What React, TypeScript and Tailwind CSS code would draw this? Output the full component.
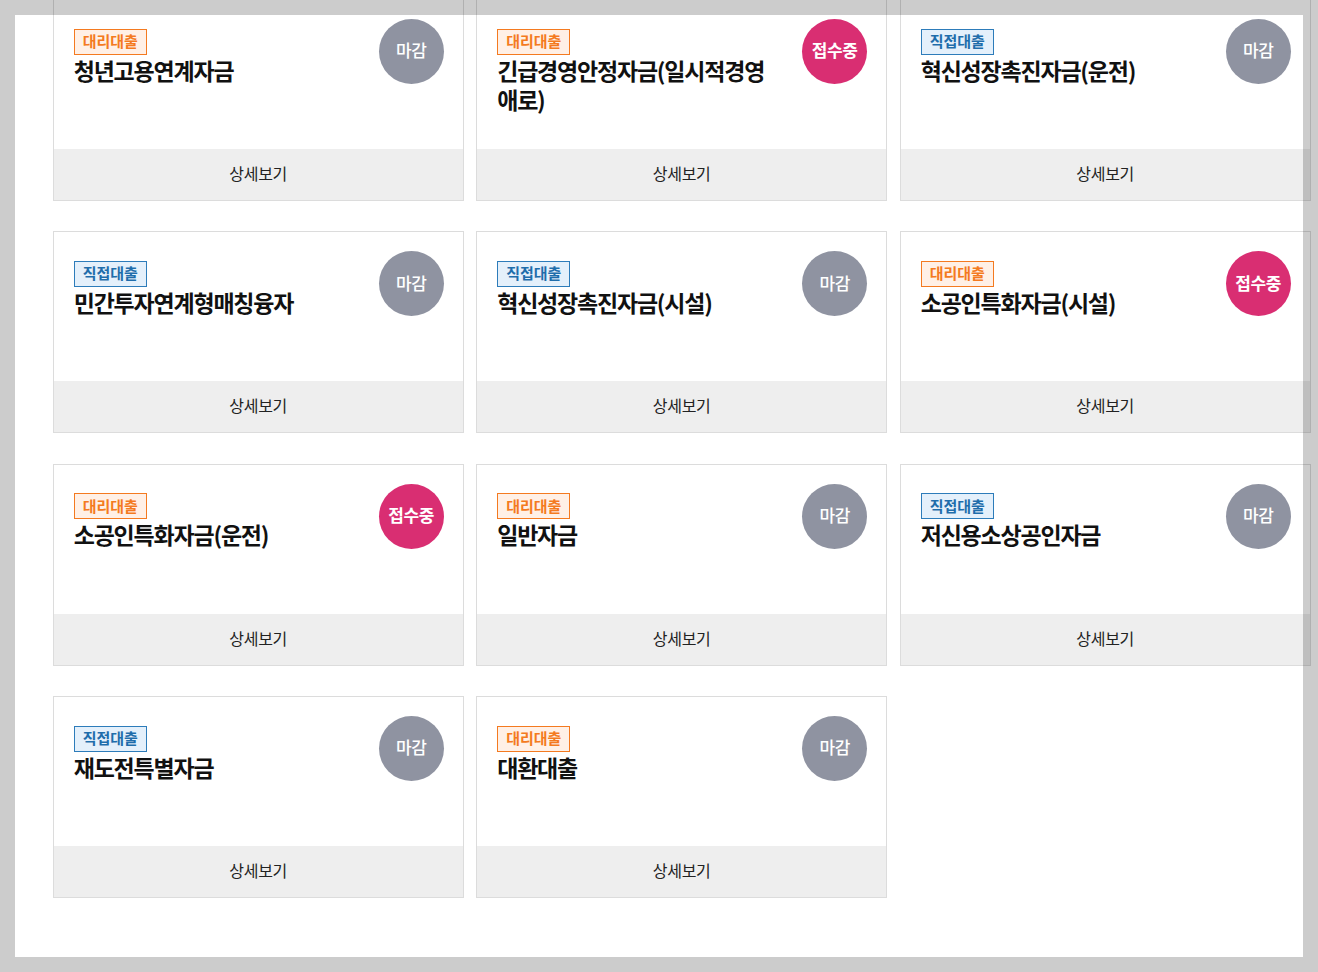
import React from "react";

type Item = { type: "대리대출" | "직접대출"; title: string; open: boolean };

const items: Item[] = [
  { type: "대리대출", title: "청년고용연계자금", open: false },
  { type: "대리대출", title: "긴급경영안정자금(일시적경영애로)", open: true },
  { type: "직접대출", title: "혁신성장촉진자금(운전)", open: false },
  { type: "직접대출", title: "민간투자연계형매칭융자", open: false },
  { type: "직접대출", title: "혁신성장촉진자금(시설)", open: false },
  { type: "대리대출", title: "소공인특화자금(시설)", open: true },
  { type: "대리대출", title: "소공인특화자금(운전)", open: true },
  { type: "대리대출", title: "일반자금", open: false },
  { type: "직접대출", title: "저신용소상공인자금", open: false },
  { type: "직접대출", title: "재도전특별자금", open: false },
  { type: "대리대출", title: "대환대출", open: false },
];

function Card({ item }: { item: Item }) {
  const agent = item.type === "대리대출";
  return (
    <div className="flex h-[202px] flex-col border border-[#dcdcdc] bg-white">
      <div className="flex flex-1 justify-between pl-[20px] pr-[19px] pt-[19px]">
        <div className="pt-[9px]">
          <span
            className={
              agent
                ? "inline-flex h-[26px] items-center border border-[#f47a20] bg-[#fff0e6] px-[8px] pb-[1px] text-[15px] font-bold tracking-[0px] text-[#f47a20]"
                : "inline-flex h-[26px] items-center border border-[#2d7cba] bg-[#e4f0fb] px-[8px] pb-[1px] text-[15px] font-bold tracking-[0px] text-[#1f6dab]"
            }
          >
            {item.type}
          </span>
          <div className="mt-[1px] w-[282px] text-[23px] font-bold leading-[29px] tracking-[-1.2px] text-[#111111]">
            {item.title}
          </div>
        </div>
        <div
          className={
            item.open
              ? "flex h-[65px] w-[65px] shrink-0 items-center justify-center rounded-full bg-[#d92e72] pb-[3px] text-[17px] font-bold tracking-[-0.4px] text-white"
              : "flex h-[65px] w-[65px] shrink-0 items-center justify-center rounded-full bg-[#8f93a1] pb-[3px] text-[17px] font-medium tracking-[-0.5px] text-white"
          }
        >
          {item.open ? "접수중" : "마감"}
        </div>
      </div>
      <div className="flex h-[51px] items-center justify-center bg-[#eeeeee] pb-[3px] text-[16px] tracking-[-0.3px] text-[#222222]">
        상세보기
      </div>
    </div>
  );
}

export default function App() {
  return (
    <div
      className="min-h-[972px] bg-white"
      style={{ fontFamily: '"Noto Sans CJK KR", "Noto Sans", sans-serif' }}
    >
      <div className="ml-[52.7px] mt-[-1px] grid w-[1258px] grid-cols-[411px_411px_411px] gap-x-[12.5px] gap-y-[30.3px]">
        {items.map((it, i) => (
          <Card key={i} item={it} />
        ))}
      </div>
      <div className="pointer-events-none fixed inset-0 border-[15px] border-black/20" />
    </div>
  );
}
